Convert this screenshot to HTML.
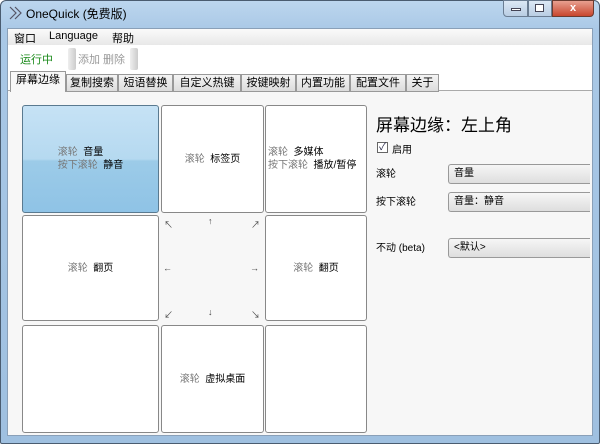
<!DOCTYPE html>
<html><head><meta charset="utf-8"><style>
*{margin:0;padding:0;box-sizing:border-box}
body{width:600px;height:444px;overflow:hidden;font-family:"Liberation Sans","Noto Sans CJK SC",sans-serif;font-size:11px;color:#000;background:#fff;position:relative}
.frame{position:absolute;inset:0;background:linear-gradient(#bcd6ee,#a9c8e6 30px,#9fc0e0);border:1px solid #4a5c70;border-radius:6px 6px 2px 2px}
.inner{position:absolute;left:7px;top:28px;width:586px;height:408px;background:#f7f7f7;border:1px solid #8aa0b8}
.abs{position:absolute}
.menu{left:0;top:0;width:584px;height:16px;background:linear-gradient(#fafafa,#e8e8e8)}
.tool{left:0;top:16px;width:584px;height:26px;background:#fff}
.tabs{left:0;top:42px;width:584px;height:20px;background:#fff;border-bottom:1px solid #aaa}
.tab{position:absolute;top:3px;height:18px;border:1px solid #999;background:linear-gradient(#f4f4f4,#dcdcdc);font-size:11px;text-align:center;line-height:16px}
.cell{position:absolute;background:#fff;border:1px solid #888;border-radius:3px;display:flex;align-items:center;justify-content:center;font-size:10px;line-height:13px}
.g{color:#777}
.combo{position:absolute;left:440px;width:142px;height:20px;border:1px solid #999;border-right:none;border-radius:3px 0 0 3px;background:linear-gradient(#f6f6f6,#dedede);padding-left:5px;line-height:18px;font-size:10px}
.ar{position:absolute;font-size:9px;color:#444}
</style></head><body>
<div class="frame"></div>
<svg class="abs" style="left:9px;top:6px" width="16" height="14"><path d="M1 1l6 6-6 6M6 1l6 6-6 6" fill="none" stroke="#556" stroke-width="1.2"/></svg>
<div class="abs" style="left:26px;top:5px;font-size:12px">OneQuick (免费版)</div>
<div class="abs" style="left:503px;top:0;width:25px;height:17px;border:1px solid #6b7d92;border-radius:0 0 0 4px;background:linear-gradient(#dce8f5,#b9cde3)"></div>
<div class="abs" style="left:511px;top:8px;width:10px;height:3px;border:1px solid #445;background:#fff"></div>
<div class="abs" style="left:528px;top:0;width:24px;height:17px;border:1px solid #6b7d92;background:linear-gradient(#dce8f5,#b9cde3)"></div>
<div class="abs" style="left:535px;top:4px;width:9px;height:8px;border:1px solid #445;background:#fff"></div>
<div class="abs" style="left:552px;top:0;width:42px;height:17px;border:1px solid #6b3b30;border-radius:0 0 4px 0;background:linear-gradient(#e8a090,#c8462e);color:#fff;text-align:center;font-weight:bold;font-size:11px;line-height:15px">x</div>
<div class="inner">
 <div class="abs menu"><span class="abs" style="left:6px;top:1px">窗口</span><span class="abs" style="left:41px;top:1px">Language</span><span class="abs" style="left:104px;top:1px">帮助</span></div>
 <div class="abs tool">
  <span class="abs" style="left:12px;top:6px;color:#1a8a1a">运行中</span>
  <div class="abs" style="left:60px;top:3px;width:8px;height:22px;background:linear-gradient(90deg,#eee,#ccc);border-radius:2px"></div>
  <span class="abs" style="left:70px;top:6px;color:#999">添加 删除</span>
  <div class="abs" style="left:122px;top:3px;width:8px;height:22px;background:linear-gradient(90deg,#eee,#ccc);border-radius:2px"></div>
 </div>
 <div class="abs tabs">
  <div class="tab" style="left:2px;top:0;height:21px;width:56px;background:#f7f7f7;border-bottom:none">屏幕边缘</div>
  <div class="tab" style="left:58px;width:52px">复制搜索</div>
  <div class="tab" style="left:110px;width:55px">短语替换</div>
  <div class="tab" style="left:165px;width:68px">自定义热键</div>
  <div class="tab" style="left:233px;width:55px">按键映射</div>
  <div class="tab" style="left:288px;width:54px">内置功能</div>
  <div class="tab" style="left:342px;width:56px">配置文件</div>
  <div class="tab" style="left:398px;width:33px">关于</div>
 </div>
 <div class="cell" style="left:14px;top:76px;width:137px;height:108px;background:linear-gradient(#c6e2f5,#b5d9f0 50%,#9ccbe8 52%,#8fc3e6);border-color:#5a7a90"><div><span class="g">滚轮</span>&nbsp; 音量<br><span class="g">按下滚轮</span>&nbsp; 静音</div></div>
 <div class="cell" style="left:153px;top:76px;width:103px;height:108px"><div><span class="g">滚轮</span>&nbsp; 标签页</div></div>
 <div class="cell" style="left:257px;top:76px;width:102px;height:108px;justify-content:flex-start;padding-left:2px"><div><span class="g">滚轮</span>&nbsp; 多媒体<br><span class="g">按下滚轮</span>&nbsp; 播放/暂停</div></div>
 <div class="cell" style="left:14px;top:186px;width:137px;height:106px"><div><span class="g">滚轮</span>&nbsp; 翻页</div></div>
 <div class="cell" style="left:257px;top:186px;width:102px;height:106px"><div><span class="g">滚轮</span>&nbsp; 翻页</div></div>
 <span class="ar" style="left:156px;top:189px">↖</span><span class="ar" style="left:200px;top:187px">↑</span><span class="ar" style="left:243px;top:189px">↗</span>
 <span class="ar" style="left:155px;top:234px">←</span><span class="ar" style="left:242px;top:234px">→</span>
 <span class="ar" style="left:156px;top:279px">↙</span><span class="ar" style="left:200px;top:278px">↓</span><span class="ar" style="left:243px;top:279px">↘</span>
 <div class="cell" style="left:14px;top:296px;width:137px;height:108px"></div>
 <div class="cell" style="left:153px;top:296px;width:103px;height:108px"><div><span class="g">滚轮</span>&nbsp; 虚拟桌面</div></div>
 <div class="cell" style="left:257px;top:296px;width:102px;height:108px"></div>
 <div class="abs" style="left:368px;top:82px;font-size:17px">屏幕边缘：左上角</div>
 <div class="abs" style="left:369px;top:113px;width:11px;height:11px;border:1px solid #666;background:#fff;font-size:10px;line-height:9px;text-align:center;color:#224">✓</div>
 <span class="abs" style="left:384px;top:112px;font-size:10px">启用</span>
 <span class="abs" style="left:368px;top:136px;font-size:10px">滚轮</span>
 <div class="combo" style="top:135px">音量</div>
 <span class="abs" style="left:368px;top:164px;font-size:10px">按下滚轮</span>
 <div class="combo" style="top:163px">音量：静音</div>
 <span class="abs" style="left:368px;top:210px;font-size:10px">不动 (beta)</span>
 <div class="combo" style="top:209px">&lt;默认&gt;</div>
</div>
</body></html>
